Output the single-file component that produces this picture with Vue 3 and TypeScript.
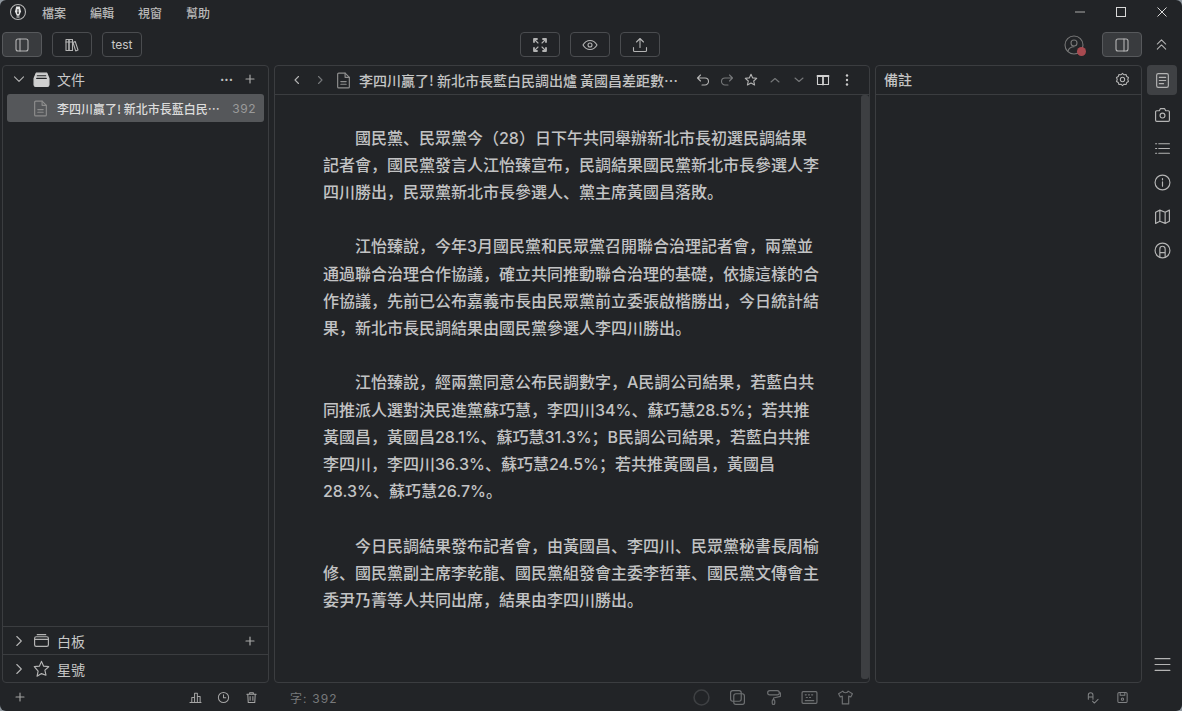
<template>
  <div class="window">
    <header class="titlebar">
      <svg class="logo" width="18" height="18" viewBox="0 0 18 18" fill="none">
        <circle cx="9" cy="9" r="7.500" stroke="#b4b4b4" stroke-width="1.100" />
        <path d="M7.200 3.500h3.600L12 8.500 10.200 12.800H7.800L6 8.500z" fill="#e6e6e6" />
        <path d="M9 6v3.500" stroke="#222" stroke-width="1" />
        <circle cx="9" cy="10" r=".9" fill="#222" />
        <path d="M7.500 14h3" stroke="#e6e6e6" stroke-width="1" />
      </svg>
      <nav class="menu">
        <span v-for="m in menus" :key="m">{{ m }}</span>
      </nav>
      <div class="win-controls">
        <svg width="12" height="12" viewBox="0 0 12 12"><path d="M1 6h10" stroke="#aaa" stroke-width="1.200" /></svg>
        <svg width="12" height="12" viewBox="0 0 12 12"><rect x="1.500" y="1.500" width="9" height="9" fill="none" stroke="#d8d8d8" stroke-width="1" /></svg>
        <svg width="12" height="12" viewBox="0 0 12 12"><path d="M1.500 1.500l9 9M10.500 1.500l-9 9" stroke="#d8d8d8" stroke-width="1" /></svg>
      </div>
    </header>

    <div class="toolbar">
      <div class="tool-group">
        <button class="tool active">
          <svg class="ic" viewBox="0 0 16 16"><rect x="2" y="2" width="12" height="12" rx="2" /><path d="M6 2v12" /></svg>
        </button>
        <button class="tool">
          <svg class="ic" viewBox="0 0 16 16"><rect x="2" y="2.500" width="3" height="11" /><rect x="5" y="2.500" width="3.500" height="11" /><path d="M9 5.500l2.200-1 2.800 8.400-2.300 1z" /><path d="M2 5h3M5 5h3.500" /></svg>
        </button>
        <button class="tool text-tool">test</button>
      </div>
      <div class="tool-group center-tools">
        <button class="tool">
          <svg class="ic" viewBox="0 0 16 16"><path d="M2.500 2.500l3.500 3.500M13.500 2.500L10 6M2.500 13.500L6 10M13.500 13.500L10 10" /><path class="thick" d="M2 5V2h3M11 2h3v3M2 11v3h3M14 11v3h-3" /></svg>
        </button>
        <button class="tool">
          <svg class="ic" viewBox="0 0 16 16"><path d="M1 8C2.800 4.800 5.200 3.500 8 3.500S13.200 4.800 15 8C13.200 11.200 10.800 12.500 8 12.500S2.800 11.200 1 8z" /><circle cx="8" cy="8" r="2" /></svg>
        </button>
        <button class="tool">
          <svg class="ic" viewBox="0 0 16 16"><path d="M8 10.500V1.500M4.500 5L8 1.500 11.500 5M1.500 10.500v3a1 1 0 0 0 1 1h11a1 1 0 0 0 1-1v-3" /></svg>
        </button>
      </div>
      <div class="tool-group right-tools">
        <span class="avatar">
          <svg class="ic avatar-ic" viewBox="0 0 20 20"><circle cx="10" cy="10" r="9" /><circle cx="10" cy="8" r="3" /><path d="M4 16c1-3 3.500-4.200 6-4.200" /></svg>
          <i class="badge"></i>
        </span>
        <button class="tool active">
          <svg class="ic" viewBox="0 0 16 16"><rect x="2" y="2" width="12" height="12" rx="2" /><path d="M10 2v12" /></svg>
        </button>
        <svg class="ic collapse" viewBox="0 0 16 16"><path d="M3.500 7.500L8 3l4.500 4.500M3.500 13L8 8.500l4.500 4.500" /></svg>
      </div>
    </div>

    <main class="workspace">
      <aside class="panel left">
        <div class="section-head">
          <svg class="ic chevron" viewBox="0 0 12 12"><path d="M1.500 3.800L6 8.300l4.500-4.500" /></svg>
          <svg class="ic sec-icon" viewBox="0 0 16 16"><path class="solid" d="M3 2h10l2 5v6a1.500 1.500 0 0 1-1.500 1.500h-11A1.500 1.500 0 0 1 1 13V7z" /><path class="cut" d="M4 4.500h8M3.500 7h9" /></svg>
          <span class="sec-title">文件</span>
          <span class="sec-actions">
            <span class="dots">···</span>
            <svg class="ic plus" viewBox="0 0 10 10"><path d="M5 1v8M1 5h8" /></svg>
          </span>
        </div>
        <div class="file-row">
          <svg class="ic file-ic" viewBox="0 0 14 16"><path d="M2.500 1h6l4 4v9a1 1 0 0 1-1 1h-9a1 1 0 0 1-1-1V2a1 1 0 0 1 1-1z" /><path d="M8.500 1v4h4M4.500 9h5M4.500 11.500h5" /></svg>
          <span class="file-name">李四川贏了! 新北市長藍白民調出爐 黃國昌差距數</span>
          <span class="file-count">392</span>
        </div>
        <div class="spacer"></div>
        <div class="section-row">
          <svg class="ic chevron" viewBox="0 0 12 12"><path d="M3.800 1.500L8.300 6l-4.500 4.500" /></svg>
          <svg class="ic sec-icon" viewBox="0 0 16 16"><rect x="1.500" y="4.500" width="13" height="9" rx="1.500" /><path d="M4 2.500h8M1.500 7h13" /></svg>
          <span class="sec-title">白板</span>
          <span class="sec-actions">
            <svg class="ic plus" viewBox="0 0 10 10"><path d="M5 1v8M1 5h8" /></svg>
          </span>
        </div>
        <div class="section-row">
          <svg class="ic chevron" viewBox="0 0 12 12"><path d="M3.800 1.500L8.300 6l-4.500 4.500" /></svg>
          <svg class="ic sec-icon" viewBox="0 0 16 16"><path d="M8 1.300l2 4.500 4.800.5-3.600 3.200 1 4.800L8 12.800l-4.200 2.500 1-4.800L1.200 6.300 6 5.800z" /></svg>
          <span class="sec-title">星號</span>
        </div>
      </aside>

      <section class="panel editor">
        <div class="editor-head">
          <svg class="ic nav" viewBox="0 0 12 12"><path d="M7.500 2.500L4 6l3.500 3.500" /></svg>
          <svg class="ic nav dim" viewBox="0 0 12 12"><path d="M4.500 2.500L8 6 4.500 9.500" /></svg>
          <svg class="ic doc-ic" viewBox="0 0 14 16"><path d="M2.500 1h6l4 4v9a1 1 0 0 1-1 1h-9a1 1 0 0 1-1-1V2a1 1 0 0 1 1-1z" /><path d="M8.500 1v4h4M4.500 9h5M4.500 11.500h5" /></svg>
          <span class="doc-title">李四川贏了! 新北市長藍白民調出爐 黃國昌差距數據公布結果出爐</span>
          <div class="doc-actions">
            <svg class="ic act" viewBox="0 0 14 14"><path d="M4.500 2L1.500 5l3 3M1.500 5H9a3.500 3.500 0 0 1 0 7H6" /></svg>
            <svg class="ic act dim" viewBox="0 0 14 14"><path d="M9.500 2l3 3-3 3M12.500 5H5a3.500 3.500 0 0 0 0 7h3" /></svg>
            <svg class="ic act" viewBox="0 0 14 14"><path d="M7 1.200l1.700 3.700 4 .4-3 2.700.9 4L7 10l-3.600 2 .9-4-3-2.700 4-.4z" /></svg>
            <svg class="ic act dim" viewBox="0 0 14 14"><path d="M3 9l4-3.500L11 9" /></svg>
            <svg class="ic act dim" viewBox="0 0 14 14"><path d="M3 5l4 3.500L11 5" /></svg>
            <svg class="ic act bright" viewBox="0 0 14 14"><rect x="1.500" y="2.500" width="11" height="9" /><path class="thick" d="M1.500 3h11M7 3v8.500" /></svg>
            <svg class="act" viewBox="0 0 14 14"><circle cx="7" cy="2.500" r="1.200" fill="#ccc" /><circle cx="7" cy="7" r="1.200" fill="#ccc" /><circle cx="7" cy="11.500" r="1.200" fill="#ccc" /></svg>
          </div>
        </div>
        <div class="editor-body">
          <article class="doc">
            <p v-for="(para, i) in paragraphs" :key="i">{{ para }}</p>
          </article>
          <div class="scrollbar"></div>
        </div>
      </section>

      <section class="panel notes">
        <div class="notes-head">
          <span class="notes-title">備註</span>
          <svg class="ic gear" viewBox="0 0 16 16"><path d="M8 1.500l1.600 1.500 2.200-.3.700 2.100 1.900 1.100-.8 2.100.8 2.100-1.900 1.100-.7 2.100-2.200-.3L8 14.500l-1.600-1.500-2.200.3-.7-2.100-1.900-1.100.8-2.100-.8-2.100 1.900-1.100.7-2.100 2.200.3z" /><circle cx="8" cy="8" r="2.300" /></svg>
        </div>
      </section>

      <aside class="rail">
        <div class="rail-top">
          <span class="rail-btn active">
            <svg class="ic" viewBox="0 0 16 16"><rect x="2.500" y="1.500" width="11" height="13" rx="1.500" /><path d="M5 5h6M5 8h6M5 11h4" /></svg>
          </span>
          <span class="rail-btn">
            <svg class="ic" viewBox="0 0 16 16"><path d="M2.500 4.500h2.500L6 2.500h4l1 2h2.500a1 1 0 0 1 1 1v8a1 1 0 0 1-1 1h-11a1 1 0 0 1-1-1v-8a1 1 0 0 1 1-1z" /><circle cx="8" cy="9" r="2.300" /></svg>
          </span>
          <span class="rail-btn">
            <svg class="ic" viewBox="0 0 16 16"><path d="M4.500 3.500h10M4.500 8h10M4.500 12.500h10M1.500 3.500h1M1.500 8h1M1.500 12.500h1" /></svg>
          </span>
          <span class="rail-btn">
            <svg class="ic" viewBox="0 0 16 16"><circle cx="8" cy="8" r="7" /><path d="M8 7.300v4.200M8 4.300v1.200" /></svg>
          </span>
          <span class="rail-btn">
            <svg class="ic" viewBox="0 0 16 16"><path d="M1.500 4l4-2 5 2 4-2v10.500l-4 2-5-2-4 2zM5.500 2v10.500M10.500 4v10.500" /></svg>
          </span>
          <span class="rail-btn">
            <svg class="ic" viewBox="0 0 16 16"><circle cx="8" cy="8" r="7" /><path d="M5.500 14V6.500a2.500 2.500 0 0 1 5 0V14M5.500 10h5" /></svg>
          </span>
        </div>
        <span class="rail-btn hamburger">
          <svg class="ic" viewBox="0 0 16 16"><path d="M1 2.500h14M1 8h14M1 13.500h14" /></svg>
        </span>
      </aside>
    </main>

    <footer class="statusbar">
      <div class="status-left">
        <svg class="ic st plus-st" viewBox="0 0 10 10"><path d="M5 1v8M1 5h8" /></svg>
        <div class="status-left-icons">
          <svg class="ic st" viewBox="0 0 14 14"><path d="M1 12.500h12M3 12.500V7h3v5.500M6 12.500V2.500h3v10M9 12.500V6h3v6.500" /></svg>
          <svg class="ic st" viewBox="0 0 14 14"><circle cx="7" cy="7" r="5.500" /><path d="M7 4v3.300h2.500" /></svg>
          <svg class="ic st" viewBox="0 0 14 14"><path d="M2 3.500h10M5 3.500V2h4v1.500M3 3.500l.5 9h7l.5-9M5.500 6v4M8.500 6v4" /></svg>
        </div>
      </div>
      <span class="word-count">字: 392</span>
      <div class="status-center">
        <svg class="ic sc" viewBox="0 0 16 16"><circle cx="8" cy="8" r="7" /></svg>
        <svg class="ic sc" viewBox="0 0 16 16"><rect x="1.500" y="1.500" width="10" height="10" rx="2" /><rect x="4.500" y="4.500" width="10" height="10" rx="2" /></svg>
        <svg class="ic sc" viewBox="0 0 16 16"><rect x="2.500" y="1.500" width="11" height="4" rx="2" /><path d="M13.500 3.500h1v3.500L8 8.500V10" /><rect x="6.800" y="10" width="2.400" height="4.500" rx="1.200" /></svg>
        <svg class="ic sc" viewBox="0 0 16 16"><rect x="1" y="2.500" width="14" height="11" rx="1" /><path d="M4 5.500h1M7 5.500h1M10 5.500h1M5 8h1M8 8h1M4 11h8" /></svg>
        <svg class="ic sc" viewBox="0 0 16 16"><path d="M5.500 2L1.500 4.500l1.500 3 2-.8v7.300h6V6.700l2 .8 1.500-3L10.500 2C10 4 6 4 5.500 2z" /></svg>
      </div>
      <div class="status-right">
        <svg class="ic st" viewBox="0 0 14 14"><path d="M2.500 9V4.500a2.500 2.500 0 0 1 5 0V9M2.500 6.500h5M7 11l2 2 4-4" /></svg>
        <svg class="ic st" viewBox="0 0 14 14"><rect x="2" y="1.500" width="10" height="11" rx="1.500" /><path d="M4.500 1.500v3h5v-3" /><circle cx="7" cy="8.800" r="1.200" /></svg>
      </div>
    </footer>
  </div>
</template>

<script setup lang="ts">
const menus: string[] = ['檔案', '編輯', '視窗', '幫助']

const paragraphs: string[] = [
  '國民黨、民眾黨今（28）日下午共同舉辦新北市長初選民調結果記者會，國民黨發言人江怡臻宣布，民調結果國民黨新北市長參選人李四川勝出，民眾黨新北市長參選人、黨主席黃國昌落敗。',
  '江怡臻說，今年3月國民黨和民眾黨召開聯合治理記者會，兩黨並通過聯合治理合作協議，確立共同推動聯合治理的基礎，依據這樣的合作協議，先前已公布嘉義市長由民眾黨前立委張啟楷勝出，今日統計結果，新北市長民調結果由國民黨參選人李四川勝出。',
  '江怡臻說，經兩黨同意公布民調數字，A民調公司結果，若藍白共同推派人選對決民進黨蘇巧慧，李四川34%、蘇巧慧28.5%；若共推黃國昌，黃國昌28.1%、蘇巧慧31.3%；B民調公司結果，若藍白共推李四川，李四川36.3%、蘇巧慧24.5%；若共推黃國昌，黃國昌28.3%、蘇巧慧26.7%。',
  '今日民調結果發布記者會，由黃國昌、李四川、民眾黨秘書長周榆修、國民黨副主席李乾龍、國民黨組發會主委李哲華、國民黨文傳會主委尹乃菁等人共同出席，結果由李四川勝出。',
]
</script>

<style>
html,
body {
  background: #8d959c;
}
</style>

<style scoped>
.window {
  display: flex;
  flex-direction: column;
  width: 1182px;
  height: 711px;
  overflow: hidden;
  border-radius: 6px;
  background: #222427;
  color: #d6d6d6;
  font-family: Inter, "Noto Sans CJK SC", sans-serif;
}

.ic {
  display: block;
  fill: none;
  stroke: #b4b4b4;
  stroke-width: 1.100;
  stroke-linecap: round;
  stroke-linejoin: round;
  flex: none;
}

.titlebar {
  display: flex;
  align-items: center;
  flex: none;
  height: 24px;
  padding-left: 9px;
}

.menu {
  display: flex;
  gap: 24px;
  margin-left: 15px;
  font-size: 12px;
  font-weight: 500;
  color: #b8b8b8;
}

.win-controls {
  display: flex;
  gap: 29px;
  margin-left: auto;
  padding-right: 14px;
}

.toolbar {
  display: flex;
  align-items: center;
  flex: none;
  height: 41px;
  padding: 0 13px 0 2px;
}

.tool-group {
  display: flex;
  align-items: center;
  gap: 10px;
}

.center-tools {
  margin-left: 378px;
}

.right-tools {
  margin-left: auto;
}

.tool {
  display: flex;
  align-items: center;
  justify-content: center;
  width: 40px;
  height: 25px;
  padding: 0;
  border: 1px solid #4a4c4f;
  border-radius: 4px;
  background: transparent;
  color: #c8c8c8;
  font: inherit;
  font-size: 12px;
}

.tool .ic {
  width: 16px;
  height: 16px;
}

.tool.active {
  background: #393b3e;
  border-color: #57595c;
}

.thick {
  stroke-width: 1.800;
}

.avatar {
  position: relative;
  width: 20px;
  height: 20px;
  margin-right: 8px;
}

.avatar-ic {
  width: 20px;
  height: 20px;
  stroke: #777;
}

.badge {
  position: absolute;
  right: -2px;
  bottom: -1px;
  width: 9px;
  height: 9px;
  border-radius: 50%;
  background: #a84a50;
}

.collapse {
  width: 15px;
  height: 15px;
  margin-left: 2px;
}

.workspace {
  display: flex;
  flex: 1;
  gap: 5px;
  min-height: 0;
  padding: 0 5px 0 2px;
}

.panel {
  display: flex;
  flex-direction: column;
  box-sizing: border-box;
  border: 1px solid #3b3d40;
  border-radius: 4px;
}

.left {
  width: 267px;
}

.editor {
  width: 596px;
}

.notes {
  width: 267px;
}

.section-head,
.section-row {
  display: flex;
  align-items: center;
  flex: none;
  box-sizing: border-box;
  height: 28px;
  padding: 0 13px 0 10px;
}

.section-head {
  padding-bottom: 2px;
}

.section-row {
  border-top: 1px solid #3b3d40;
}

.chevron {
  width: 12px;
  height: 12px;
}

.sec-icon {
  width: 17px;
  height: 17px;
  margin-left: 8px;
}

.solid {
  fill: #cfcfcf;
  stroke: #cfcfcf;
}

.cut {
  stroke: #222427;
}

.sec-title {
  margin-left: 7px;
  font-size: 14px;
  color: #c8c8c8;
}

.sec-actions {
  display: flex;
  align-items: center;
  gap: 12px;
  margin-left: auto;
}

.dots {
  font-size: 13px;
  font-weight: 700;
  line-height: 1;
  color: #c0c0c0;
}

.plus {
  width: 10px;
  height: 10px;
  stroke: #a8a8a8;
  stroke-width: 1.200;
}

.file-row {
  display: flex;
  align-items: center;
  flex: none;
  height: 28px;
  margin: 0 4px;
  padding: 0 8px 0 26px;
  border-radius: 3px;
  background: #55575a;
}

.file-ic {
  width: 15px;
  height: 17px;
  stroke: #8c8c8c;
}

.file-name {
  flex: 1;
  min-width: 0;
  margin-left: 9px;
  overflow: hidden;
  font-family: "Noto Sans CJK SC", sans-serif;
  font-size: 12px;
  font-weight: 500;
  color: #dcdcdc;
  text-overflow: ellipsis;
  white-space: nowrap;
}

.file-count {
  margin-left: 12px;
  font-size: 12px;
  color: #9a9a9a;
  letter-spacing: 0.5px;
}

.spacer {
  flex: 1;
}

.editor-head {
  display: flex;
  align-items: center;
  flex: none;
  height: 28px;
  padding: 0 16px;
  border-bottom: 1px solid #3b3d40;
}

.nav {
  width: 12px;
  height: 12px;
  margin-right: 11px;
}

.dim {
  stroke: #76787a;
}

.doc-ic {
  width: 15px;
  height: 17px;
  margin-left: -1px;
  stroke: #8e8e8e;
}

.doc-title {
  flex: 1;
  min-width: 0;
  margin-left: 8px;
  overflow: hidden;
  font-family: "Noto Sans CJK SC", sans-serif;
  font-size: 14px;
  font-weight: 500;
  color: #c4c4c4;
  text-overflow: ellipsis;
  white-space: nowrap;
}

.doc-actions {
  display: flex;
  align-items: center;
  gap: 10px;
  margin-left: 8px;
  margin-right: -1px;
}

.act {
  display: block;
  width: 14px;
  height: 14px;
}

.bright {
  stroke: #d0d0d0;
}

.editor-body {
  position: relative;
  flex: 1;
  min-height: 0;
}

.doc {
  width: 498px;
  padding: 29.500px 0 0 48px;
  font-size: 16px;
  font-weight: 500;
  line-height: 27.200px;
  color: #c2c3c4;
}

.doc p {
  margin: 0 0 27.200px;
  text-indent: 2em;
}

.scrollbar {
  position: absolute;
  top: 0;
  right: 0;
  bottom: 3px;
  width: 8px;
  border-radius: 3px;
  background: #3d3f42;
}

.notes-head {
  display: flex;
  align-items: center;
  justify-content: space-between;
  flex: none;
  box-sizing: border-box;
  height: 29px;
  padding: 0 11px 2px 8px;
  border-bottom: 1px solid #3b3d40;
}

.notes-title {
  font-size: 14px;
  font-weight: 500;
  color: #c4c4c4;
}

.gear {
  width: 15px;
  height: 15px;
}

.rail {
  display: flex;
  flex-direction: column;
  justify-content: space-between;
  width: 30px;
}

.rail-top {
  display: flex;
  flex-direction: column;
  gap: 4px;
}

.rail-btn {
  display: flex;
  align-items: center;
  justify-content: center;
  width: 30px;
  height: 30px;
  border-radius: 4px;
}

.rail-btn .ic {
  width: 17px;
  height: 17px;
}

.rail-btn.active {
  background: #3f4144;
}

.hamburger {
  margin-bottom: 4px;
}

.statusbar {
  display: flex;
  align-items: center;
  flex: none;
  height: 28px;
}

.status-left {
  display: flex;
  align-items: center;
  width: 258px;
  padding-left: 15px;
  box-sizing: border-box;
}

.status-left-icons {
  display: flex;
  gap: 15px;
  margin-left: auto;
}

.st {
  width: 13px;
  height: 13px;
  stroke: #a4a4a4;
}

.plus-st {
  width: 10px;
  height: 10px;
}

.word-count {
  margin-left: 32px;
  font-size: 12px;
  letter-spacing: 1.100px;
  color: #77797b;
}

.status-center {
  display: flex;
  align-items: center;
  gap: 19px;
  margin-left: 355px;
}

.sc {
  width: 17px;
  height: 17px;
  stroke: #6e7072;
}

.status-center .sc:first-child {
  stroke: #3e4043;
  stroke-width: 1.500;
}

.status-right {
  display: flex;
  gap: 17px;
  margin-left: auto;
  padding-right: 53px;
}

.status-right .st {
  stroke: #808284;
}
</style>
